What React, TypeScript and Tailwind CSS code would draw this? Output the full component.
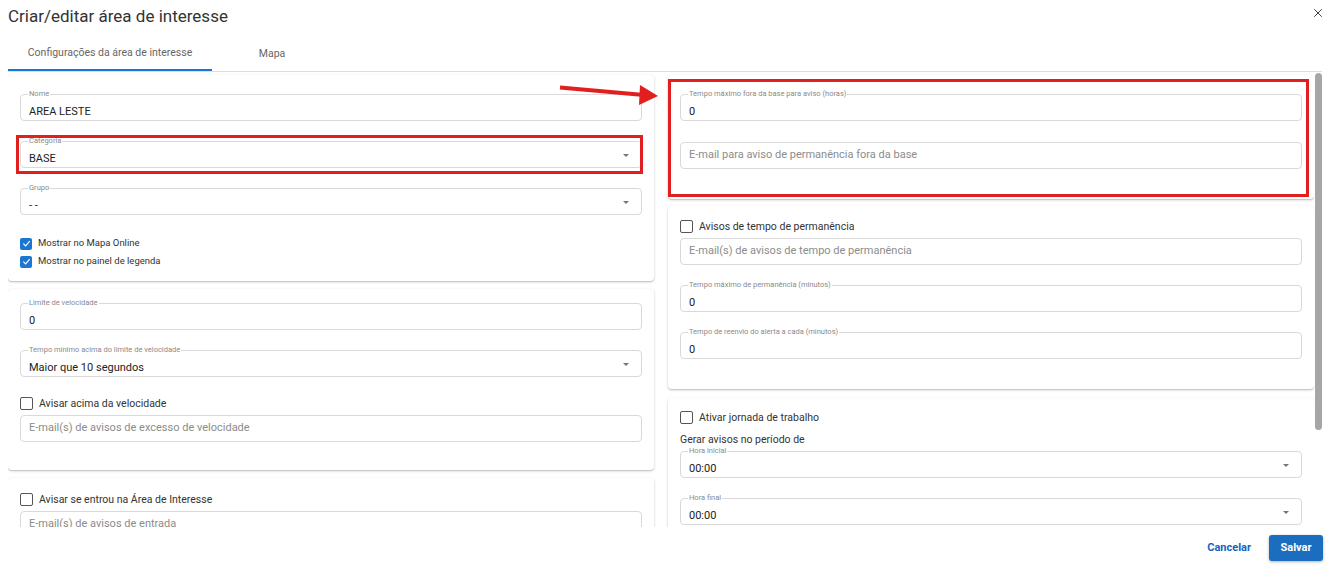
import { X } from "lucide-react";
import type { ReactNode } from "react";

function Caret() {
  return (
    <svg width="6" height="3" viewBox="0 0 6 3" className="absolute right-[12px] top-[12px]">
      <path d="M0 0 L6 0 L3 3 Z" fill="#757575" />
    </svg>
  );
}

function Field({
  label,
  value,
  placeholder,
  select,
  className = "",
}: {
  label?: string;
  value?: string;
  placeholder?: string;
  select?: boolean;
  className?: string;
}) {
  return (
    <div className={"relative h-[27px] rounded-[4px] border border-[#d9d9d9] bg-white " + className}>
      {label && (
        <span className="absolute left-[7px] -top-[6px] bg-white px-[1px] text-[7.5px] leading-[10px] text-[#8a8a8a]">
          {label}
        </span>
      )}
      <div className={"flex h-full items-center pl-[8px] text-[11px] " + (label ? "pt-[10px]" : "")}>
        {value !== undefined ? (
          <span className="text-[#222] [font-variant-ligatures:none]">{value}</span>
        ) : (
          <span className="text-[#8c8c8c]">{placeholder}</span>
        )}
      </div>
      {select && <Caret />}
    </div>
  );
}

function Check({ label, checked, small, className = "" }: { label: string; checked?: boolean; small?: boolean; className?: string }) {
  return (
    <div className={"flex h-[15px] items-center gap-[6px] " + className}>
      {checked ? (
        <span className="flex h-[12px] w-[12px] items-center justify-center rounded-[2px] bg-[#1976d2]">
          <svg width="9" height="9" viewBox="0 0 10 10">
            <path d="M1.5 5.2 L4 7.6 L8.6 2.4" fill="none" stroke="white" strokeWidth="1.3" />
          </svg>
        </span>
      ) : (
        <span className="h-[13px] w-[13px] rounded-[2px] border border-[#555]" />
      )}
      <span className={small ? "text-[9.5px] text-[#333]" : "text-[10.5px] text-[#333]"}>{label}</span>
    </div>
  );
}

function Card({ children, className = "" }: { children: ReactNode; className?: string }) {
  return (
    <div
      className={
        "relative rounded-[4px] bg-white px-[12px] shadow-[0_1px_3px_rgba(0,0,0,0.18),0_1px_1px_rgba(0,0,0,0.12)] " + className
      }
    >
      {children}
    </div>
  );
}

export default function App() {
  return (
    <div className="relative flex h-[569px] w-[1330px] flex-col overflow-hidden bg-white font-['Roboto',sans-serif] text-[#333]">
      {/* header */}
      <div className="flex h-[32px] items-center justify-between pl-[8px] pr-[5px] pt-[2px]">
        <h2 className="text-[17px] font-normal text-[#333]">Criar/editar área de interesse</h2>
        <X size={14} strokeWidth={1.6} className="mb-[8px] text-[#333]" />
      </div>

      {/* tabs */}
      <div className="mx-[8px] flex h-[40px] border-b border-[#dedede]">
        <div className="flex w-[204px] items-center justify-center border-b-2 border-[#1976d2] pt-[4px] text-[10.5px] text-[#666]">
          Configurações da área de interesse
        </div>
        <div className="flex w-[120px] items-center justify-center pt-[4px] text-[10.5px] text-[#666]">Mapa</div>
      </div>

      {/* body */}
      <div className="flex h-[455px] pl-[8px]">
        <div className="grid w-[1306px] grid-cols-2 gap-[14px] overflow-hidden pt-[3px]">
          {/* left column */}
          <div className="flex flex-col">
            <Card className="pb-[12px] pt-[19px]">
              <Field label="Nome" value="AREA LESTE" />
              <div className="relative mt-[20px]">
                <Field label="Categoria" value="BASE" select />
                <div className="pointer-events-none absolute -bottom-[6px] -left-[4px] -right-[1px] -top-[6px] border-[3px] border-[#e21f1f]" />
              </div>
              <Field label="Grupo" value="- -" select className="mt-[20px]" />
              <Check label="Mostrar no Mapa Online" checked small className="mt-[21px]" />
              <Check label="Mostrar no painel de legenda" checked small className="mt-[3px]" />
            </Card>

            <Card className="mt-[8px] pb-[28px] pt-[14px]">
              <Field label="Limite de velocidade" value="0" />
              <Field label="Tempo mínimo acima do limite de velocidade" value="Maior que 10 segundos" select className="mt-[20px]" />
              <Check label="Avisar acima da velocidade" className="mt-[19px]" />
              <Field placeholder="E-mail(s) de avisos de excesso de velocidade" className="mt-[4px]" />
            </Card>

            <Card className="mt-[8px] pb-[20px] pt-[14px]">
              <Check label="Avisar se entrou na Área de Interesse" />
              <Field placeholder="E-mail(s) de avisos de entrada" className="mt-[4px]" />
            </Card>
          </div>

          {/* right column */}
          <div className="flex flex-col">
            <Card className="pb-[30px] pt-[19px]">
              <Field label="Tempo máximo fora da base para aviso (horas)" value="0" />
              <Field placeholder="E-mail para aviso de permanência fora da base" className="mt-[21px]" />
              <div className="pointer-events-none absolute bottom-[2px] left-0 right-[5px] top-[4px] border-[3px] border-[#e21f1f]" />
            </Card>

            <Card className="mt-[7px] pb-[30px] pt-[13px]">
              <Check label="Avisos de tempo de permanência" />
              <Field placeholder="E-mail(s) de avisos de tempo de permanência" className="mt-[4px]" />
              <Field label="Tempo máximo de permanência (minutos)" value="0" className="mt-[20px]" />
              <Field label="Tempo de reenvio do alerta a cada (minutos)" value="0" className="mt-[20px]" />
            </Card>

            <Card className="mt-[9px] pb-[20px] pt-[12px]">
              <Check label="Ativar jornada de trabalho" />
              <div className="mt-[8px] text-[10.5px] leading-[14px] text-[#333]">Gerar avisos no período de</div>
              <Field label="Hora inicial" value="00:00" select className="mt-[4px]" />
              <Field label="Hora final" value="00:00" select className="mt-[20px]" />
            </Card>
          </div>
        </div>

        {/* scrollbar */}
        <div className="ml-[1px] w-[7px]">
          <div className="mt-[1px] h-[357px] w-[7px] rounded-[4px] bg-[#a6a6a6]" />
        </div>
      </div>

      {/* footer */}
      <div className="flex flex-1 items-center justify-end gap-[18px] pr-[7px]">
        <button className="text-[11px] font-bold text-[#1565c0]">Cancelar</button>
        <button className="h-[26px] w-[54px] rounded-[3px] bg-[#1a6dbf] text-[11px] font-bold text-white shadow-[0_1px_3px_rgba(0,0,0,0.3)]">
          Salvar
        </button>
      </div>

      {/* annotation arrow */}
      <svg className="pointer-events-none absolute left-0 top-0" width="1330" height="569">
        <line x1="560" y1="87.5" x2="644" y2="95" stroke="#e21f1f" strokeWidth="4" />
        <polygon points="640,85 658,96 639,105" fill="#e21f1f" />
      </svg>
    </div>
  );
}
